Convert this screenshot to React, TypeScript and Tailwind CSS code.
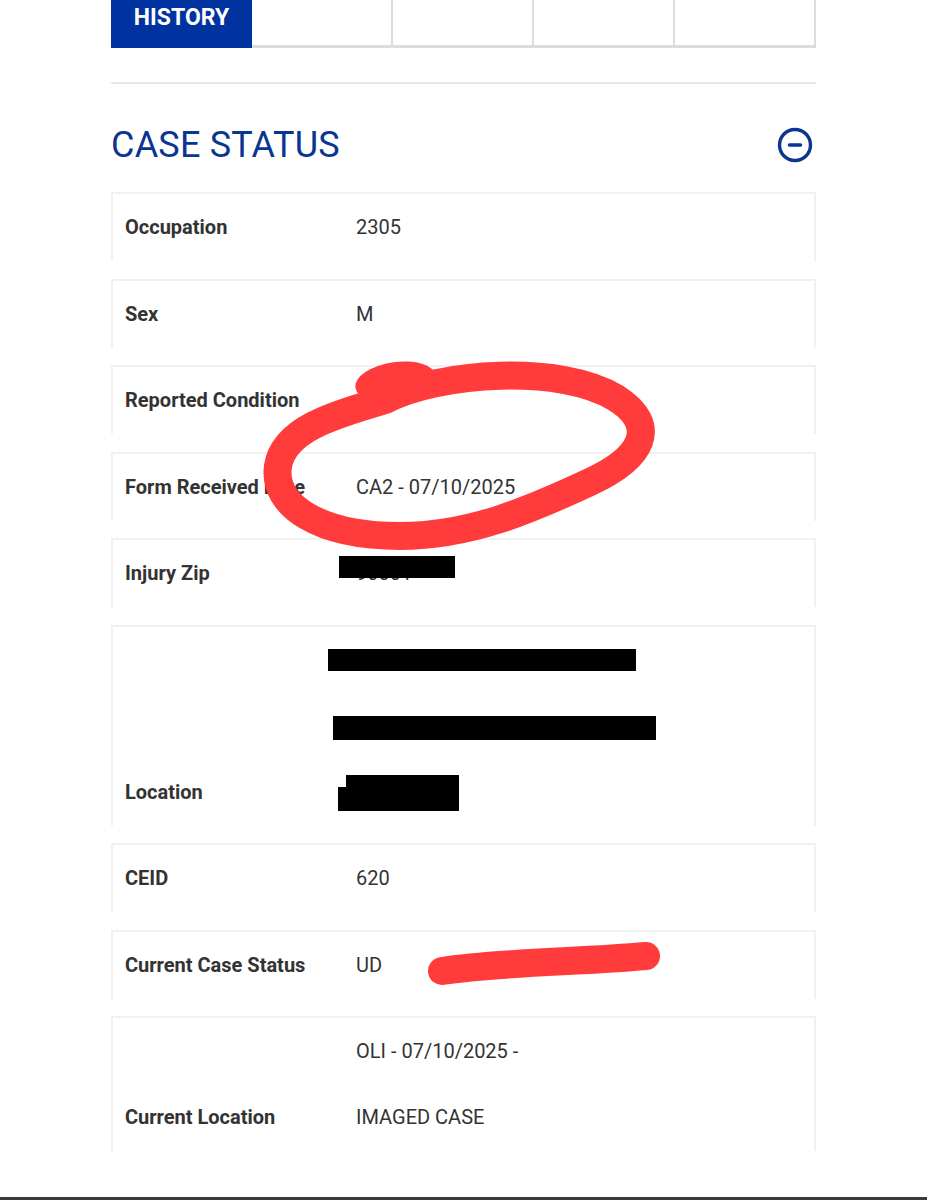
import { Fragment } from 'react'

type Row = {
  label: string
  values: string[]
}

const rows: Row[] = [
  { label: 'Occupation', values: ['2305'] },
  { label: 'Sex', values: ['M'] },
  { label: 'Reported Condition', values: [''] },
  { label: 'Form Received Date', values: ['CA2 - 07/10/2025'] },
  { label: 'Injury Zip', values: ['90001'] },
  { label: 'Location', values: ['1234 EXAMPLE STREET STE', 'SOMEWHERE CITY, ST 00000', 'USA 0000'] },
  { label: 'CEID', values: ['620'] },
  { label: 'Current Case Status', values: ['UD'] },
  { label: 'Current Location', values: ['OLI - 07/10/2025 -', 'IMAGED CASE'] },
]

const tabs = ['HISTORY', '', '', '', '']

function MinusCircle() {
  return (
    <svg width="36" height="36" viewBox="0 0 36 36" fill="none">
      <circle cx="18" cy="18" r="15.5" stroke="#0a3591" strokeWidth="3.4" />
      <line x1="12.5" y1="18" x2="23.5" y2="18" stroke="#0a3591" strokeWidth="3.6" strokeLinecap="round" />
    </svg>
  )
}

// red marker + black redaction marks sit on top of the page
function Annotations() {
  return (
    <svg
      className="absolute inset-0 pointer-events-none"
      width="927"
      height="1200"
      viewBox="0 0 927 1200"
    >
      {/* redactions */}
      <rect x="339" y="556" width="116" height="22" fill="#000" />
      <rect x="328" y="649" width="308" height="22" fill="#000" />
      <rect x="333" y="716" width="323" height="24" fill="#000" />
      <rect x="346" y="775" width="113" height="25" fill="#000" />
      <rect x="338" y="787" width="121" height="24" fill="#000" />

      {/* red loop */}
      <path
        d="M 385 400 C 440 372, 560 364, 616 398 C 660 426, 642 458, 590 482 C 530 510, 470 536, 400 536 C 320 536, 272 506, 278 466 C 284 430, 330 416, 385 400"
        stroke="#ff3b3b"
        strokeWidth="28"
        fill="none"
        strokeLinecap="round"
        strokeLinejoin="round"
      />
      <ellipse cx="396" cy="382" rx="41" ry="20" transform="rotate(-8 396 382)" fill="#ff3b3b" />

      {/* red strike */}
      <path
        d="M 442 971 C 500 962, 580 962, 646 956"
        stroke="#ff3b3b"
        strokeWidth="28"
        fill="none"
        strokeLinecap="round"
      />
    </svg>
  )
}

export default function App() {
  return (
    <div
      className="relative h-[1200px] w-[927px] bg-white flex flex-col overflow-hidden"
      style={{ fontFamily: 'Roboto, "Liberation Sans", sans-serif' }}
    >
      <div className="flex-1 w-[705px] mx-auto">
        {/* Tabs */}
        <div className="grid grid-cols-5 h-[48px]">
          {tabs.map((t, i) => (
            <div
              key={i}
              className={
                i === 0
                  ? 'bg-[#0033a0] text-white font-bold text-[23px] leading-[24px] pt-[6px] text-center'
                  : 'border-r-2 border-b-[3px] border-[#dcdcdc]'
              }
            >
              {t}
            </div>
          ))}
        </div>

        <div className="mt-[34px] h-[2px] bg-[#e8e8e8]" />

        {/* Header */}
        <div className="flex items-center justify-between mt-[39px] mb-[25px] h-[44px]">
          <h2 className="text-[36px] leading-[44px] text-[#0a3591] font-normal tracking-[0.2px]">CASE STATUS</h2>
          <div className="mr-[3px]">
            <MinusCircle />
          </div>
        </div>

        {/* Rows */}
        <div className="flex flex-col gap-[17.5px]">
          {rows.map((r) => (
            <div
              key={r.label}
              className="border-t-2 border-x-2 border-[#f1f1f1] pb-px flex text-[20px] leading-[66px] text-[#333]"
            >
              <div className="w-[243px] pl-[12px] font-bold flex items-end">{r.label}</div>
              <div className="flex flex-col">
                {r.values.map((v, i) => (
                  <Fragment key={i}>
                    <div className="h-[66px]">{v}</div>
                  </Fragment>
                ))}
              </div>
            </div>
          ))}
        </div>
      </div>

      <div className="h-[3px] bg-[#3a3a3a]" />

      <Annotations />
    </div>
  )
}
